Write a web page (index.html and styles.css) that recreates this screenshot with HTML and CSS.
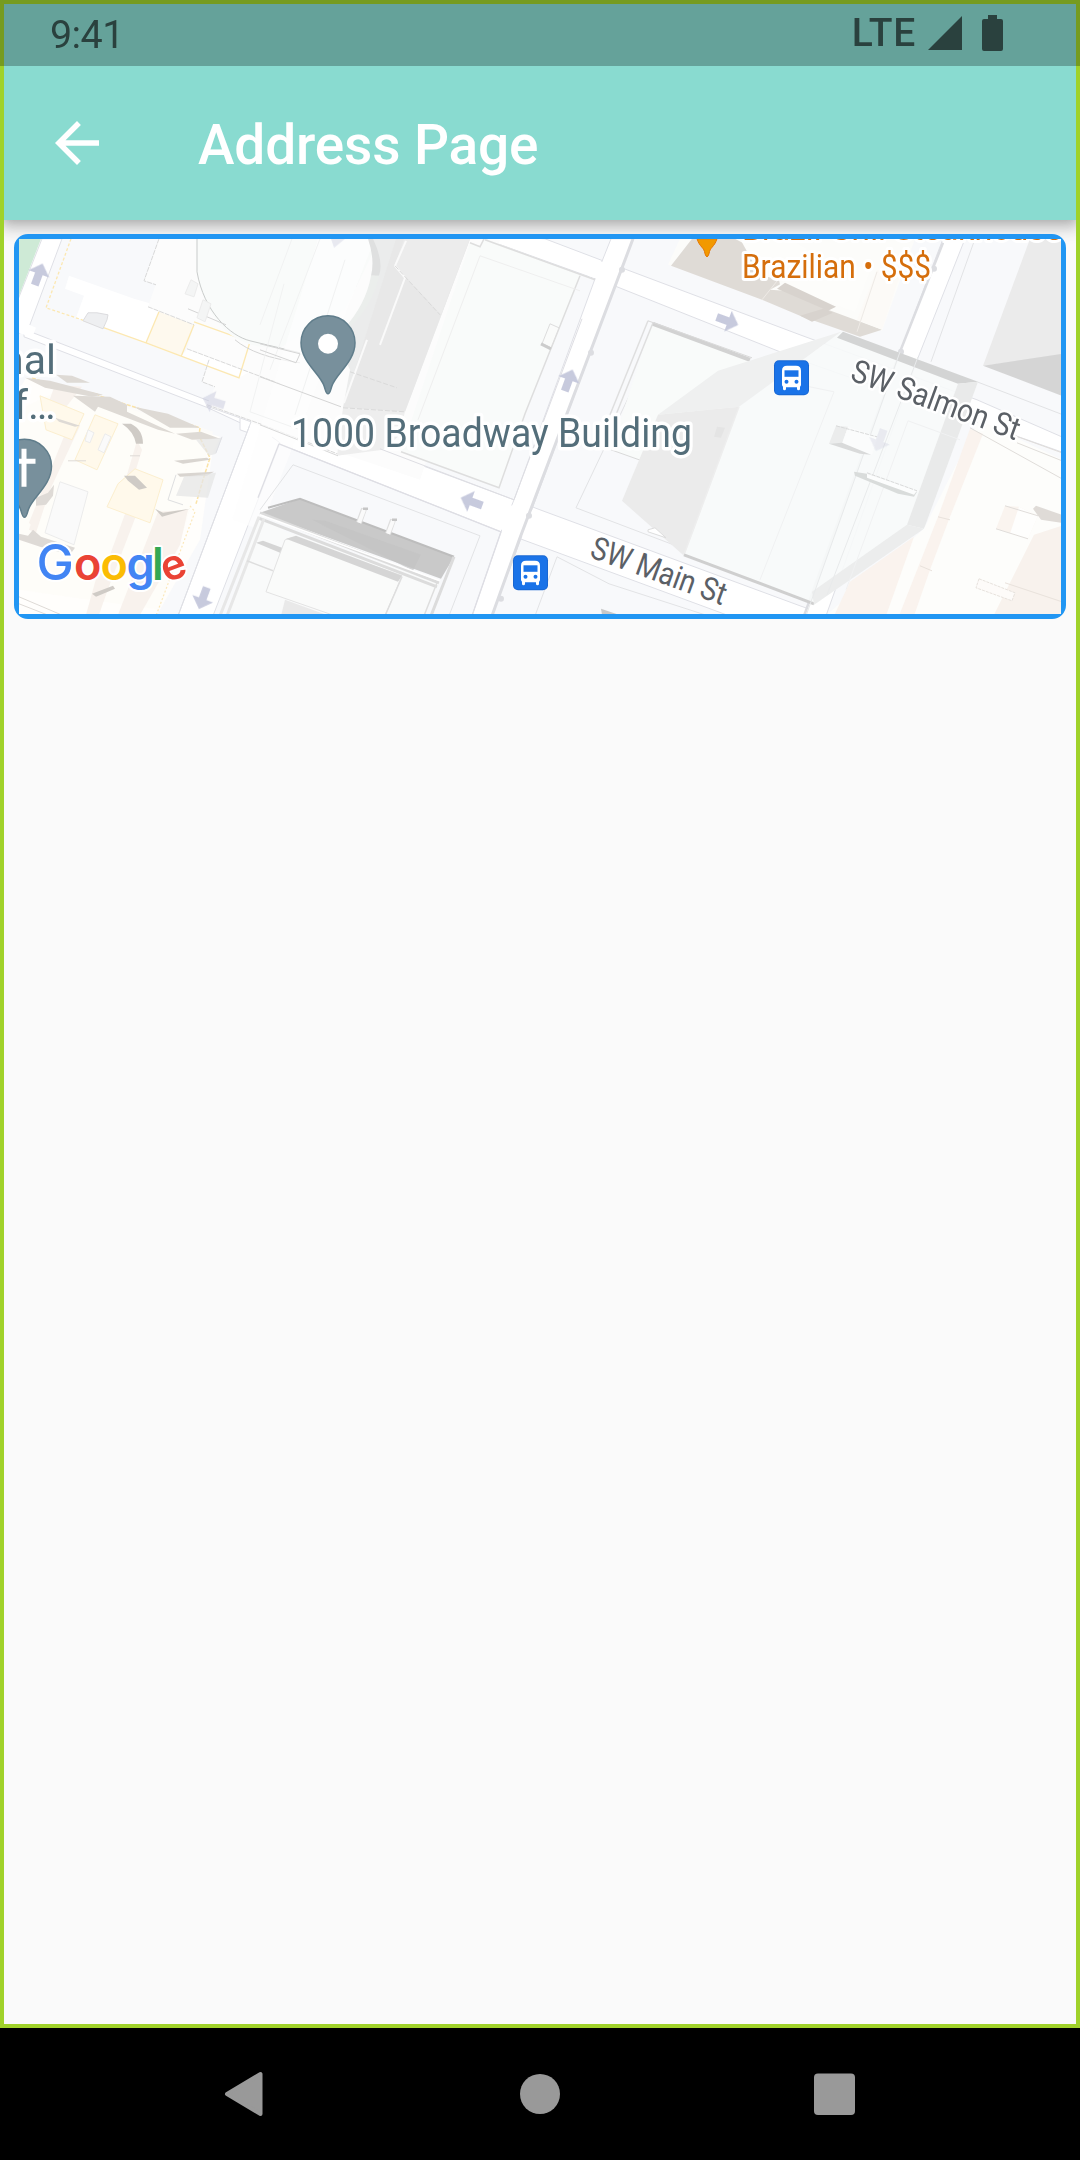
FILE: index.html
```html
<!DOCTYPE html>
<html lang="en">
<head>
<meta charset="utf-8">
<title>Address Page</title>
<link rel="stylesheet" href="styles.css">
</head>
<body>
<div class="screen">
  <div class="app">
    <header class="header">
      <div class="status">
        <span class="clock">9:41</span>
        <div class="indicators">
          <span class="network">LTE</span>
          <svg class="signal" viewBox="0 0 34 34"><path d="M34 0V34H0Z"/></svg>
          <svg class="battery" viewBox="0 0 21 36"><path d="M6 0h9v4h4a2 2 0 0 1 2 2v28a2 2 0 0 1-2 2H2a2 2 0 0 1-2-2V6a2 2 0 0 1 2-2h4z"/></svg>
        </div>
      </div>
      <div class="toolbar">
        <svg class="back" viewBox="0 0 24 24"><path d="M20 11H7.830l5.590-5.590L12 4l-8 8 8 8 1.410-1.410L7.830 13H20v-2z"/></svg>
        <h1 class="title">Address Page</h1>
      </div>
    </header>
    <main class="content">
      <div class="map-card">
        <svg class="map" viewBox="19 239.200 1042 375">
          <defs>
            <path id="arrow" d="M-11-4H1V-11L12 0 1 11V4H-11Z" fill="#c5c8dc"/>
            <g id="bus">
              <rect x="-17.500" y="-17.500" width="35" height="35" rx="5" fill="#1967d2"/>
              <rect x="-16.500" y="-16.500" width="33" height="33" rx="4" fill="#1a73e8"/>
              <path d="M-9.500-7q0-5 5-5h9q5 0 5 5V7q0 1-1 2v2q0 1.500-1.500 1.500T5.500 11V9.500h-11V11q0 1.500-1.500 1.500T-8.500 11V9q-1-1-1-2Z" fill="#fff"/>
              <path d="M-7-7.500H7V-1H-7Z" fill="#1a73e8"/>
              <circle cx="-5" cy="4" r="2" fill="#1a73e8"/><circle cx="5" cy="4" r="2" fill="#1a73e8"/>
            </g>
            <path id="pin" d="M0 39C-2 39-2 37-4 31-8 19-27 7-27-12A27 27 0 0 1 27-12C27 7 8 19 4 31 2 37 2 39 0 39Z" fill="#78909c" stroke="#607d8b" stroke-width="1.500"/>
          </defs>
          <path fill="#f8f9fb" d="M19 239H1062V615H19Z"/>

          <!-- streets -->
          <g fill="#fff" stroke="#dfe0e6" stroke-width="1">
            <path d="M24 330L28 331 206 400 254 418 266 435 208 408 24 337Z"/>
            <path d="M42 239H62L28 330 12 336V315Z"/>
            <path d="M240 412L380 450 514 500 540 510 800 606 840 620H740L523 540 501 532 279 444 240 430Z"/>
            <path d="M251 422L178 616H213L280 443Z"/>
            <path d="M470 234L545 239 603 261 800 335 977 400 1064 438V453L800 360 617 287 595 279Z"/>
            <path d="M611 239H633L492 616H472L501 532 514 500 595 279Z"/>
            <path d="M943 239H965L918 358 826 616H804L900 352Z"/>
          </g>
          <g fill="#fff">
            <path d="M245 415L275 425 270 445 255 440Z"/>
            <path d="M508 505L536 512 524 537 495 526Z"/>
            <path d="M590 258L626 271 618 286 588 276Z"/>
            <path d="M502 508L528 502 514 534 496 528Z"/>
            <path d="M20 321L36 328 32 338 19 333Z"/>
          </g>
          <path d="M633 239L520 538 492 616" fill="none" stroke="#dcdde1" stroke-width="3"/>
          <path d="M943 243L900 352 804 616" fill="none" stroke="#dcdde1" stroke-width="2.500"/>
          <g fill="#dcdde1"><circle cx="622" cy="270" r="3"/><circle cx="591" cy="353" r="3"/><circle cx="529" cy="516" r="3"/><circle cx="501" cy="599" r="3"/><circle cx="934" cy="269" r="3"/><circle cx="901" cy="352" r="3"/></g>
          <path d="M19 239H41L19 296Z" fill="#ceead6"/>
          <g fill="none" stroke="#e2e3e5" stroke-width="1">
            <path d="M975 239L931 362M653 346L576 508 684 549"/>
            <path d="M977 382L1063 415"/>
            <path d="M535 616L557 557 609 584 705 615"/>
          </g>

          <!-- block at the top left -->
          <path d="M69 276L134 299 148 303 182 312 194 320 181 357 82 320 76 318 84 296 65 289Z" fill="#fff"/>
          <path d="M159 239L144 281 156 284 148 307 194 325 187 349 209 360 202 382 215 387 207 405 251 423 420 480 500 240Z" fill="#fcfcfc"/>
          <path d="M187 349L250 372 241 377 181 357Z" fill="#fff"/>
          <path d="M159 312L194 325 181 357 146 343Z" fill="#fef9ee"/>
          <g fill="none" stroke="#fce8b2" stroke-width="1.300">
            <path d="M71 239L46 308 82 320" stroke-dasharray="3 2"/>
            <path d="M82 320L146 343 207 366 239 378 250 342 194 322M159 312L146 343M194 325L181 357"/>
            <path d="M223 239L205 282" stroke-dasharray="3 2"/>
          </g>
          <path d="M159 239L144 281 156 285M148 307L194 325M187 349L280 384M209 360L202 382 215 387M207 405L260 424 340 455" fill="none" stroke="#d9d9d9" stroke-dasharray="5 1"/>
          <path d="M83 321L88 313 97 313 108 315 107 320 103 329Z" fill="#eeeff1" stroke="#dcdcdf"/>
          <path d="M197 239V270C204 310 222 350 280 348L345 310 380 239Z" fill="#f9fbfa"/>
          <path d="M197 239V272C204 312 230 336 250 341L300 353" fill="none" stroke="#c9cccb" stroke-width="1"/>
          <path d="M188 309L226 325M235 340Q255 357 300 363" fill="none" stroke="#d5d5d5"/>
          <path d="M191 280L198 284 194 297 185 294ZM203 300L211 304 205 322 197 318Z" fill="#f4f5f5" stroke="#ececec"/>
          <path d="M318 239H375L260 530 232 520Z" fill="#fdfdfd" opacity=".7"/>
          <path d="M292 239L260 325M320 239L270 370M345 260L295 415M284 284L250 412 300 430" fill="none" stroke="#f1f2f2"/>
          <path d="M369 239Q385 269 366 295 360 315 342 330L340 350 350 370 343 408 405 412 470 239Z" fill="#ebecec"/>
          <path d="M396 239H470L405 412 343 408Z" fill="#e8e8e8"/>
          <path d="M404 239H470L441 315 395 266Z" fill="#ececec"/>
          <path d="M368 239H373Q384 262 379 276L371 276Q375 260 368 239Z" fill="#dfe0e0"/>
          <path d="M371 276H379Q373 305 350 328L343 330Q366 305 371 276Z" fill="#ebeeec"/>
          <path d="M343 408L405 412 398 437 383 450 337 456Z" fill="#eee"/>
          <path d="M406 241L395 266 405 278 380 345M367 340L344 403" fill="none" stroke="#fafafa" stroke-width="2"/>
          <path d="M395 266L440 315M350 372L397 388M343 408L405 412" fill="none" stroke="#dadada" stroke-dasharray="5 2"/>
          <path d="M260 344L300 354 296 363 260 350M260 377L341 407" fill="none" stroke="#d5d5d5"/>
          <path d="M260 425L338 456" stroke="#d8d8d8"/>

          <!-- Broadway building roof -->
          <path d="M470 243L480 246 485 239 580 275 525 414 499 488 401 452Z" fill="#f9fbfa"/>
          <path d="M470 243L480 247 484 239M485 240L595 280M580 276L525 414 499 488 401 452" fill="none" stroke="#dedede" stroke-width="1.500"/>
          <path d="M380 449L514 500 582 319" fill="none" stroke="#dedee3"/>
          <path d="M480 256L580 291M480 256L418 420" fill="none" stroke="#efefef"/>
          <path d="M550 324L559 328 551 348 542 344Z" fill="#fafbfa" stroke="#ddd"/><path d="M541 344L551 349" stroke="#ccc" stroke-width="3"/>

          <!-- block at the lower left -->
          <path d="M26 378L220 437 212 455 200 540 157 615H19V390Z" fill="#fffefc"/>
          <path d="M60 390L180 420 213 432 160 610 19 590V410Z" fill="#fefcf8" opacity=".7"/>
          <g fill="#f8f1ec" opacity=".9">
            <path d="M55 385L82 387 48 430 44 416Z"/><path d="M70 422L80 426 50 490 36 530 29 523Z"/>
            <path d="M137 441L142 450 134 476 127 475Z"/><path d="M135 487L146 490 98 615H88Z"/>
            <path d="M158 512L188 510 180 545 140 615H118Z"/><path d="M45 482L51 486 36 533 29 530Z"/>
            <path d="M98 572L112 577 99 615H86Z"/>
          </g>
          <g fill="#fff9eb" stroke="#fcefcf">
            <path d="M40 396L84 414 72 440 46 430Z"/><path d="M135 469L163 480 150 523 107 507 118 484Z"/><path d="M95 415L118 424 97 470 75 460Z"/>
          </g>
          <path d="M32 378L66 390 96 394 102 397 200 428 199 436 210 458 203 480 196 504" fill="none" stroke="#fbe3a6" stroke-width="1.500" stroke-dasharray="4 1.500"/>
          <path d="M190 506L195 512 156 616" fill="none" stroke="#fbe8bb" stroke-width="1.200" stroke-dasharray="2 2"/>
          <path d="M60 482L88 492 74 545 45 533ZM88 430L94 433 90 443 85 441ZM105 434L111 437 104 453 98 450Z" fill="#fafafa" stroke="#ececec"/>
          <g fill="#dedad5">
            <path d="M25 378L50 381 103 395 92 397 45 388Z"/><path d="M56 375L72 376 90 383 67 383Z"/>
            <path d="M73 396L110 397 127 405 127 412 175 434 158 430 98 407 95 412Z"/>
            <path d="M134 407L168 414 200 428 170 428Z"/><path d="M176 434L201 432 220 439 192 440Z"/>
            <path d="M55 418L80 426 75 427 59 422Z"/>
          </g>
          <g fill="#cfcbc6">
            <path d="M122 424L131 424Q143 430 143 444H136Q134 432 122 424Z"/><path d="M124 476L135 476 147 488 139 490 128 481Z"/>
            <path d="M155 509L163 513 190 509 162 517Z"/><path d="M174 461L207 458 210 460 183 464ZM177 474L214 472 207 476 180 477Z" opacity=".8"/>
            <path d="M92 594L113 586 115 589 96 597Z"/>
          </g>
          <path d="M196 440L222 438 216 454 209 456Z M184 477L216 473 208 498 176 496Z" fill="#e5e5e5" opacity=".75"/>
          <path d="M176 475L168 500 183 505" fill="none" stroke="#dedfe0"/>
          <path d="M36 498L48 493 54 485 53 496 46 505 36 506ZM19 534L28 536 33 530 41 537 75 548 70 555 40 547 19 540Z" fill="#dedad6"/>
          <path d="M68 461H86M130 456H140M19 597L120 640M19 604L60 620" stroke="#dedad6" fill="none"/>
          <path d="M206 406L251 422 178 616M222 437L216 453" fill="none" stroke="#dfe0e5"/>

          <!-- block below Main Street -->
          <path d="M293 465L260 510M293 465L480 536 449 616" fill="none" stroke="#e2e3e5"/>
          <path d="M260 515L285 532 440 582 424 616H227Z" fill="#f9fafa"/>
          <path d="M260 513L300 499 454 557 441 579Z" fill="#c9c9c9"/>
          <path d="M268 508L300 499 454 557" fill="none" stroke="#bdbdbd" stroke-width="2"/>
          <path d="M312 520L325 521 421 555 413 571Z" fill="#c3c3c3" opacity=".7"/>
          <path d="M260 513L439 583M258 518L437 587M454 557L431 616" fill="none" stroke="#dcdcdc" stroke-width="3"/>
          <path d="M260 515L440 581" stroke="#fff" stroke-width="1.500"/>
          <path d="M285 540L266 592 335 616H385L402 576 293 538Z" fill="#fafbfa" stroke="#e3e3e3"/>
          <path d="M286 539L296 536 402 576 398 582Z" fill="#d5d5d5"/>
          <path d="M256 543L263 541 282 548 280 553Z" fill="#d5d5d5"/>
          <path d="M259 517L220 616M264 519L227 616" stroke="#e7e7e7" stroke-width="3"/>
          <path d="M247 561L273 571M402 577L385 616M437 583L424 616" fill="none" stroke="#dedede" stroke-width="1.500"/>
          <path d="M285 600L329 616H281Z" fill="#e9e9e9"/>
          <path d="M364 509L359 523M393 520L388 534" stroke="#dfdfdf" stroke-width="6"/><path d="M364 510L359 523M393 521L388 534" stroke="#fafafa" stroke-width="4"/>
          <path d="M363 509h5M392 520h5" stroke="#c6c6c6" stroke-width="2.500"/>
          <path d="M279 444L501 532 472 616M279 444L258 498" fill="none" stroke="#dedee4" stroke-width="1.300"/>
          <path d="M601 609L619 615H602Z" fill="#c8c8c8"/>

          <!-- large block on the right -->
          <path d="M652 323L750 360 700 480 641 461 611 450Z" fill="#f9fbfa"/>
          <path d="M648 321L610 415M653 323L616 415" stroke="#dfdfdf" stroke-width="1.500"/>
          <path d="M653 324L750 360" stroke="#d2d2d2" stroke-width="4"/><path d="M648 321L752 358M611 450L642 461" stroke="#dadada" fill="none"/>
          <path d="M841 332L978 382 924 528 814 605 684 555 739 407Z" fill="#f7faf9" opacity=".9"/>
          <path d="M658 415L718 371 841 332 739 407Z" fill="#eff0f0"/>
          <path d="M658 415L739 407 684 556 622 501Z" fill="#ebebeb"/>
          <path d="M717 427L725 428 721 438 714 437Z" fill="#e4e4e4"/>
          <path d="M648 530L655 528 666 538 648 532Z" fill="#fff" stroke="#ddd"/>
          <path d="M739 407L684 555 808 602" fill="none" stroke="#eee" stroke-width="1.500"/>
          <path d="M684 555L814 604" stroke="#cfcfcf" stroke-width="3"/>
          <path d="M843 332L978 382 958 384 837 338Z" fill="#d3d4d4"/>
          <path d="M958 384L978 382 924 529 907 525Z" fill="#e9eaea"/>
          <path d="M907 525L924 529 814 605 812 592Z" fill="#eceded"/>
          <path d="M900 352L806 616M918 357L827 595" stroke="#e8eaeb" fill="none"/>
          <path d="M800 385L834 392 760 580M908 421L960 440M908 421L846 590" stroke="#f0f1f2" fill="none"/>
          <path d="M836 426L848 427 842 444 829 444Z" fill="#ebecec"/><path d="M848 427L878 437 872 455 842 444Z" fill="#fbfcfc"/><path d="M829 444L842 443 871 455 860 454Z" fill="#d9dada"/>
          <path d="M854 472L867 474 917 492 914 497 898 494 855 476Z" fill="#d9dcdb"/><path d="M867 474L917 491 914 495 867 478Z" fill="#fcfdfd"/>
          <path d="M836 426L877 437M867 473L917 491" fill="none" stroke="#d9dada" stroke-dasharray="4 1"/>

          <!-- beige block on the far right -->
          <path d="M979 420L1062 460V615H827L924 529Z" fill="#fdfdfb"/>
          <path d="M970 429L983 434 950 517 930 570 914 616H899L938 517ZM914 537L886 616H834L850 582Z" fill="#faf3ee"/>
          <path d="M1034 535L1062 526V615H994Z" fill="#f8f2ed"/>
          <path d="M938 517L950 520M920 566L932 571M1005 583L1062 602" stroke="#e9e2dc" fill="none"/>
          <path d="M1005 506L1019 507 1038 516 1028 539 996 529Z" fill="#faf4ef"/><path d="M1019 507L1038 516 1028 539 1010 534Z" fill="#fefefd"/>
          <path d="M996 529L1028 539M1005 506L1038 516M1015 436L1062 453M1017 443L1062 461M970 428L1062 479" stroke="#e0ddda" fill="none"/>
          <path d="M1033 509L1036 506 1062 515V523L1041 520Z" fill="#dfdbd7"/>
          <path d="M979 579L1015 593 1012 601 976 588Z" fill="#fdfbf9" stroke="#e7e2dd" stroke-dasharray="3 1"/>
          <path d="M1030 239H1062V356L983 366Z" fill="#ebebeb"/>
          <path d="M983 366L1062 354V396Z" fill="#d5d5d5"/>

          <!-- restaurant block -->
          <path d="M680 239L668 265 671 266 882 331 915 239Z" fill="#fcfcfa"/>
          <path d="M692 239L671 266 762 300 800 316 860 337 882 330 820 307 780 285 775 260 735 239Z" fill="#dfdbd6"/>
          <path d="M740 239L790 239 815 255 870 270 855 312 800 292 770 290 785 282 760 275Z" fill="#fdfdfb"/>
          <path d="M900 275L882 330 857 320 877 270Z" fill="#fcfaf7"/>
          <path d="M785 283L836 307 828 311 777 289ZM800 316L823 309 833 313 812 322Z" fill="#d8d3ce"/>
          <path d="M877 272L857 332M778 280L762 300" stroke="#eeeae6"/>

          <g opacity=".95">
            <use href="#arrow" transform="translate(38.500 275) rotate(-70)"/>
            <use href="#arrow" transform="translate(214 402) rotate(198)" opacity=".5"/>
            <use href="#arrow" transform="translate(203 598) rotate(110)"/>
            <use href="#arrow" transform="translate(472 502) rotate(200)"/>
            <use href="#arrow" transform="translate(568.500 381) rotate(-70)"/>
            <use href="#arrow" transform="translate(727 321) rotate(20)"/>
            <use href="#arrow" transform="translate(880 440) rotate(110)" opacity=".3"/>
            <path d="M331 239H345L334 248Z" fill="#e7e8f0"/>
          </g>

          <!-- places -->
          <use href="#bus" x="530.500" y="573"/>
          <use href="#bus" x="791.500" y="378"/>
          <use href="#pin" x="328" y="355"/><circle cx="328" cy="344" r="10" fill="#fff"/>
          <use href="#pin" x="24.500" y="478.500"/><path d="M21.500 449h5v10h9v5h-9v23h-5v-23h-9v-5h9z" fill="#fff"/>
          <path d="M697 239H717C714 248 710 247 709 254Q707 260 705 254C704 247 700 248 697 239Z" fill="#f29900" stroke="#e37400"/>
          <g class="place">
            <text x="291" y="447" textLength="401" lengthAdjust="spacingAndGlyphs">1000 Broadway Building</text>
            <text x="56" y="374" text-anchor="end">nal</text>
            <text x="55.500" y="419.500" text-anchor="end">f…</text>
          </g>
          <g class="food">
            <text x="742" y="278" textLength="189" lengthAdjust="spacingAndGlyphs">Brazilian • $$$</text>
            <text x="742" y="239.800" textLength="320" lengthAdjust="spacingAndGlyphs">Brazil Grill Steakhouse</text>
          </g>
          <g class="street">
            <text transform="translate(849 380) rotate(20)" textLength="177" lengthAdjust="spacingAndGlyphs">SW Salmon St</text>
            <text transform="translate(588.500 557) rotate(20)" textLength="142" lengthAdjust="spacingAndGlyphs">SW Main St</text>
          </g>
          <g class="logo">
            <text class="logo-cap" x="36.500" y="580" fill="#4285f4">G</text>
            <text x="74" y="580" fill="#ea4335">o</text>
            <text x="100.500" y="580" fill="#fbbc04">o</text>
            <text x="126.500" y="580" fill="#4285f4">g</text>
            <text x="152" y="580" fill="#34a853">l</text>
            <text class="logo-end" transform="translate(166 583) rotate(-20)" fill="#ea4335">e</text>
          </g>
        </svg>
      </div>
    </main>
  </div>
  <nav class="navbar">
    <svg class="nav-icon" viewBox="0 0 48 48"><path d="M39.500 4V44L6 24Z" stroke-width="4" stroke-linejoin="round" class="nav-back"/></svg>
    <svg class="nav-icon" viewBox="0 0 48 48"><circle cx="24" cy="24" r="20"/></svg>
    <svg class="nav-icon" viewBox="0 0 48 48"><rect x="3" y="3.500" width="41" height="41.500" rx="4"/></svg>
  </nav>
</div>
</body>
</html>
```
FILE: styles.css
```css
* { box-sizing: border-box; }
body {
  margin: 0;
  font-family: Roboto, "Liberation Sans", sans-serif;
}
.screen {
  display: flex;
  flex-direction: column;
  width: 1080px;
  height: 2160px;
  background: #000;
}
.app {
  position: relative;
  flex: 1;
  display: flex;
  flex-direction: column;
  background: #fafafa;
}
.app::after {
  content: "";
  position: absolute;
  inset: 0;
  border: 4px solid #a0d22a;
  pointer-events: none;
}
.header {
  height: 220px;
  background: #89dbd0;
  box-shadow: 0 5px 11px -3px rgba(0, 0, 0, .2), 0 11px 14px rgba(0, 0, 0, .11), 0 3px 22px rgba(0, 0, 0, .09);
}
.status {
  position: relative;
  z-index: 1;
  height: 66px;
  display: flex;
  justify-content: space-between;
  align-items: center;
  padding: 0 77px 0 50px;
  background: rgba(0, 0, 0, .26);
  color: #2a413e;
  font-size: 39.500px;
  line-height: 66px;
}
.clock { padding-top: 3px; letter-spacing: -.6px; }
.indicators { display: flex; align-items: center; }
.network { font-size: 39px; font-weight: 500; letter-spacing: .7px; margin-right: 12px; }
.signal { width: 34px; height: 34px; margin-right: 20px; fill: currentColor; }
.battery { width: 21px; height: 36px; fill: currentColor; }
.toolbar {
  height: 154px;
  display: flex;
  align-items: center;
  gap: 88px;
  padding-left: 44px;
  color: #fff;
}
.back { width: 66px; height: 66px; fill: currentColor; }
.title {
  margin: 0;
  font-size: 55px;
  font-weight: 500;
  line-height: 66px;
  letter-spacing: -.15px;
  padding-top: 3px;
}
.content { padding: 14px; }
.map-card {
  height: 385px;
  border: 5px solid #2196f3;
  border-radius: 14px;
  background: #2196f3;
}
.map { display: block; width: 100%; height: 100%; overflow: hidden; }
.map text { paint-order: stroke; stroke: #fff; stroke-linejoin: round; }
.place text { font-size: 41px; fill: #546e7a; stroke-width: 7px; }
.food text { font-size: 32.500px; fill: #d56e0c; stroke-width: 6px; }
.street text { font-size: 32px; fill: #5b6066; stroke-width: 5px; }
.logo text { font-family: Inter, sans-serif; font-size: 45px; font-weight: 600; stroke-width: 4px; }
.logo .logo-cap { font-size: 50px; font-weight: 500; }
.logo .logo-end { font-size: 42px; }
.navbar {
  height: 132px;
  display: flex;
  align-items: center;
  justify-content: space-between;
  padding: 0 221px;
}
.nav-icon { width: 48px; height: 48px; fill: #999; }
.nav-back { stroke: #999; }
```
